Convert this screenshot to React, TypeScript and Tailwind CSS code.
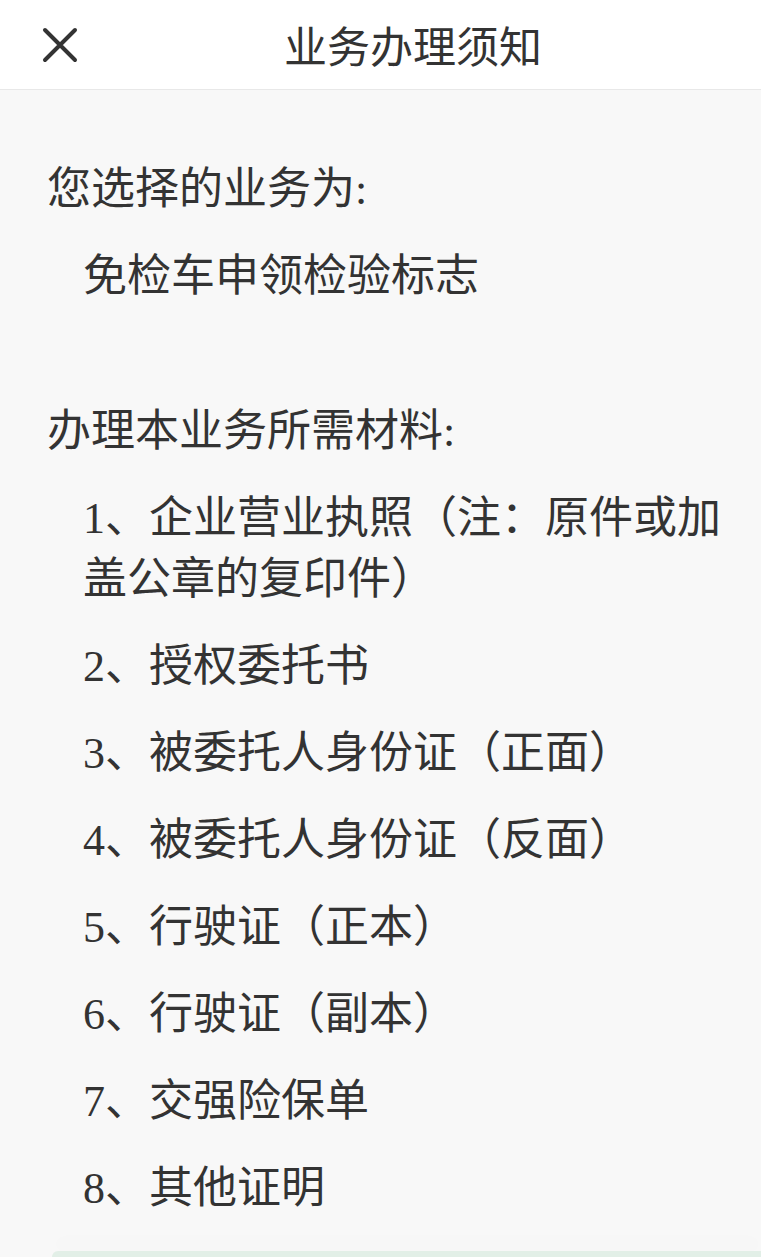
const FONT = {
  fontFamily: '"Liberation Serif", "Noto Sans CJK SC", sans-serif',
};

const ITEMS = [
  "1、企业营业执照（注：原件或加盖公章的复印件）",
  "2、授权委托书",
  "3、被委托人身份证（正面）",
  "4、被委托人身份证（反面）",
  "5、行驶证（正本）",
  "6、行驶证（副本）",
  "7、交强险保单",
  "8、其他证明",
];

function CloseIcon() {
  return (
    <svg width="36" height="36" viewBox="0 0 36 36" fill="none">
      <path
        d="M3 3L33 33M33 3L3 33"
        stroke="#333333"
        strokeWidth="4"
        strokeLinecap="round"
      />
    </svg>
  );
}

export default function App() {
  return (
    <div
      className="flex min-h-[1257px] w-full flex-col overflow-hidden bg-[#f8f8f8] text-[#333333]"
      style={FONT}
    >
      {/* Header */}
      <header className="flex h-[90px] shrink-0 items-center border-b border-[#e8e8e8] bg-white">
        <div className="ml-[42px] flex items-center">
          <CloseIcon />
        </div>
        <h1
          className="ml-[206px] text-[43px] leading-none font-normal"
          style={{ fontFamily: '"Noto Sans CJK SC", sans-serif' }}
        >
          业务办理须知
        </h1>
      </header>

      {/* Body */}
      <main className="flex flex-col gap-[26px] pl-[47px] pr-[30px] pt-[69px] text-[44px] leading-[61px]">
        <p>您选择的业务为:</p>
        <p className="pl-[36px]">免检车申领检验标志</p>

        <p className="mt-[68px]">办理本业务所需材料:</p>
        <ul className="flex flex-col gap-[26px] pl-[36px]">
          {ITEMS.map((item) => (
            <li key={item}>{item}</li>
          ))}
        </ul>
      </main>

      <div className="mt-auto ml-[52px] h-[6px] shrink-0 rounded-tl-[8px] bg-[#e2efe7] shadow-[0_-10px_18px_rgba(0,0,0,0.025)]" />
    </div>
  );
}
